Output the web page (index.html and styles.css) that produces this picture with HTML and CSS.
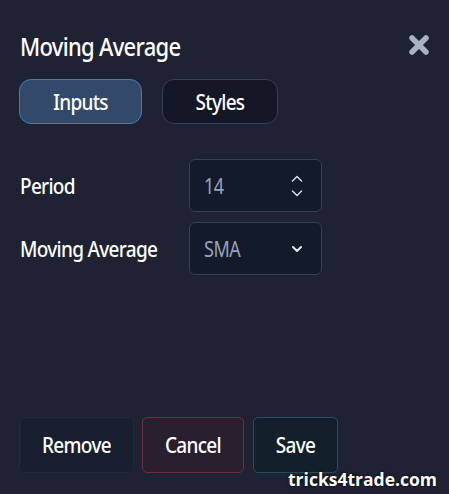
FILE: index.html
```html
<!DOCTYPE html>
<html>
<head>
<meta charset="utf-8">
<link rel="stylesheet" href="styles.css">
</head>
<body>
<div class="panel">
  <div class="header">
    <h1 class="title"><span class="tx">Moving Average</span></h1>
    <svg class="close" width="22" height="22" viewBox="0 0 22 22"><path d="M4 4 L18 18 M18 4 L4 18" stroke="#a9b1c2" stroke-width="5.5" stroke-linecap="round"/></svg>
  </div>
  <div class="tabs">
    <div class="tab tab-active"><span class="tx">Inputs</span></div>
    <div class="tab"><span class="tx">Styles</span></div>
  </div>
  <div class="form">
    <div class="label"><span class="tx">Period</span></div>
    <div class="field">
      <span class="value tx">14</span>
      <svg class="spin" width="14" height="28" viewBox="0 0 14 28"><path d="M2.5 9 L7 4.5 L11.5 9 M2.5 19 L7 23.5 L11.5 19" fill="none" stroke="#d8dce6" stroke-width="1.5" stroke-linecap="round" stroke-linejoin="round"/></svg>
    </div>
    <div class="label"><span class="tx">Moving Average</span></div>
    <div class="field">
      <span class="value tx">SMA</span>
      <svg class="chev" width="14" height="10" viewBox="0 0 14 10"><path d="M3 3 L7 7 L11 3" fill="none" stroke="#e6e9f0" stroke-width="2" stroke-linecap="round" stroke-linejoin="round"/></svg>
    </div>
  </div>
  <div class="footer">
    <div class="btn btn-remove"><span class="tx">Remove</span></div>
    <div class="btn btn-cancel"><span class="tx">Cancel</span></div>
    <div class="btn btn-save"><span class="tx">Save</span></div>
  </div>
  <div class="watermark">tricks4trade.com</div>
</div>
</body>
</html>
```
FILE: styles.css
```css
html, body {
  margin: 0;
  padding: 0;
  background: #1e2233;
}
body {
  width: 449px;
  height: 494px;
  overflow: hidden;
  font-family: "Noto Sans", sans-serif;
  color: #ffffff;
}
.panel {
  position: relative;
  height: 494px;
  box-sizing: border-box;
  padding: 28px 19px 0 19px;
  display: flex;
  flex-direction: column;
}
.tx {
  display: inline-block;
  transform: scaleY(1.17);
  font-weight: 500;
}
.header {
  display: flex;
  justify-content: space-between;
  align-items: center;
  height: 34px;
}
.title {
  margin: 0 0 0 1px;
  font-size: 22px;
  font-weight: 500;
  letter-spacing: -0.7px;
}
.close {
  margin-right: 0;
}
.tabs {
  display: flex;
  gap: 20px;
  margin-top: 17px;
}
.tab {
  height: 45px;
  box-sizing: border-box;
  border-radius: 12px;
  border: 1.5px solid #3b4152;
  background: #141826;
  display: flex;
  align-items: center;
  justify-content: center;
  font-size: 19px;
  letter-spacing: -0.7px;
  width: 116px;
}
.tab-active {
  width: 123px;
  background: #33496a;
  border-color: #3b7fc0;
}
.form {
  display: grid;
  grid-template-columns: 170px 133px;
  row-gap: 10px;
  margin-top: 35px;
}
.label {
  display: flex;
  align-items: center;
  font-size: 19px;
  letter-spacing: -0.7px;
  padding-left: 1px;
}
.field {
  height: 53px;
  box-sizing: border-box;
  border: 1.5px solid #384053;
  border-radius: 6px;
  background: #131a2b;
  display: flex;
  align-items: center;
  justify-content: space-between;
  padding: 0 17px 0 14px;
}
.value {
  font-size: 18px;
  font-weight: 400;
  color: #96a2b8;
  letter-spacing: -0.5px;
}
.footer {
  display: flex;
  gap: 8px;
  margin-top: auto;
  margin-bottom: 21px;
}
.btn {
  height: 56px;
  box-sizing: border-box;
  border-radius: 5px;
  display: flex;
  align-items: center;
  justify-content: center;
  font-size: 19px;
  letter-spacing: -0.7px;
}
.btn-remove {
  width: 115px;
  background: #1a1f30;
  border: 1px solid #232a3b;
}
.btn-cancel {
  width: 102px;
  background: #2a1f2f;
  border: 1.5px solid #6e2e40;
}
.btn-save {
  width: 85px;
  margin-left: 1px;
  background: #12202c;
  border: 1.5px solid #1d5554;
}
.watermark {
  position: absolute;
  right: 12px;
  bottom: 3px;
  font-family: "Open Sans", sans-serif;
  font-weight: 700;
  font-size: 17.5px;
  color: #ffffff;
  text-shadow: 0 0 3px #000000;
}
```
